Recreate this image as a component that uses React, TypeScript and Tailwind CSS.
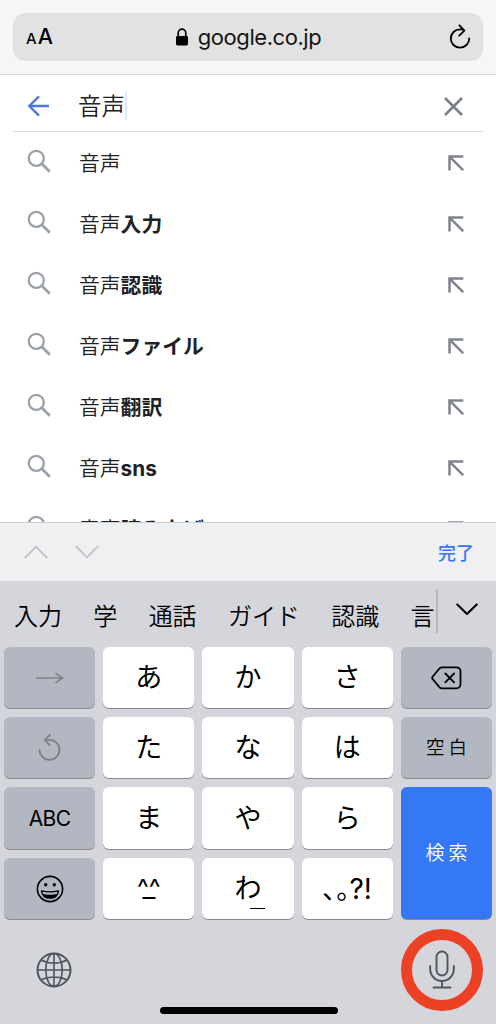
import type { ReactNode } from 'react';

interface Suggestion {
  typed: string;
  completion: string;
}

const suggestions: Suggestion[] = [
  { typed: '音声', completion: '' },
  { typed: '音声', completion: '入力' },
  { typed: '音声', completion: '認識' },
  { typed: '音声', completion: 'ファイル' },
  { typed: '音声', completion: '翻訳' },
  { typed: '音声', completion: 'sns' },
  { typed: '音声', completion: '読み上げ' },
];

const candidates = ['入力', '学', '通話', 'ガイド', '認識', '言'];

function SearchIcon() {
  return (
    <svg className="mb-[3px] size-6 shrink-0 text-[#9aa0a9]" viewBox="0 0 24 24" fill="none" stroke="currentColor">
      <circle cx="9.3" cy="9.3" r="7.5" strokeWidth={2.3} />
      <path d="M14.8 14.8l8 8" strokeWidth={2.8} />
    </svg>
  );
}

function InsertIcon() {
  return (
    <svg className="size-4 shrink-0 text-[#80848c]" viewBox="0 0 16 16" fill="none" stroke="currentColor" strokeWidth={2.5}>
      <path d="M15.3 1.5H1.5V15.5M1.800 1.800L15.200 15.200" />
    </svg>
  );
}

function AddressBar() {
  return (
    <header className="h-[75px] shrink-0 border-b border-[#d8d8d9] bg-[#f6f6f6] px-[13px] pt-[13px]">
      <div className="grid h-12 grid-cols-[1fr_auto_1fr] items-center rounded-xl bg-[#e2e2e2] pr-3 pl-[13px]">
        <div className="flex items-baseline gap-px leading-none font-medium text-black">
          <span className="text-[15px]">A</span>
          <span className="text-[21.5px]">A</span>
        </div>
        <div className="flex items-center gap-2.5 text-[#151515]">
          <svg className="h-[18px] w-3 text-black" viewBox="0 0 12 18" fill="none">
            <path d="M2.2 8.5V5a3.8 3.8 0 017.6 0v3.5" stroke="currentColor" strokeWidth={1.7} />
            <rect x="0" y="8" width="12" height="9.5" rx="1.4" fill="currentColor" />
          </svg>
          <span className="text-[22px] leading-none tracking-[-0.45px]">google.co.jp</span>
        </div>
        <svg className="h-[26px] w-[22px] justify-self-end text-black" viewBox="0 0 22 26" fill="none" stroke="currentColor" strokeWidth={1.8} strokeLinecap="round" strokeLinejoin="round">
          <path d="M20.200 14.500a9.200 9.200 0 11-9.200-9.200c1.800 0 3 .2 4.200.9M10.400 1.300l5 5.300-5.200 5" />
        </svg>
      </div>
    </header>
  );
}

function SearchField() {
  return (
    <div className="mx-[13px] flex h-[57px] shrink-0 items-center border-b border-[#dcdde0] pt-[7px] pr-5 pl-[14px]">
      <svg className="mb-px h-[22px] w-[23px] text-[#4a78dc]" viewBox="0 0 23 22" fill="none" stroke="currentColor" strokeWidth={2.4}>
        <path d="M22 11H2.5M12 1.3L2.3 11l9.7 9.7" />
      </svg>
      <div className="ml-7 flex flex-1 items-center">
        <span className="text-[23.5px] leading-7 font-[350] text-[#202124]">音声</span>
        <span className="mb-0.5 h-[29px] w-0.5 bg-[#dce8fb]" />
      </div>
      <svg className="size-[19px] text-[#7a7e86]" viewBox="0 0 19 19" fill="none" stroke="currentColor" strokeWidth={2.5}>
        <path d="M1 1l17 17M18 1L1 18" />
      </svg>
    </div>
  );
}

function SuggestionRow({ typed, completion }: Suggestion) {
  return (
    <li className="flex h-[61px] items-center pr-8 pl-[27px]">
      <SearchIcon />
      <span className="ml-7 flex-1 pt-0.5 text-[20.800px] leading-7 font-[350] text-[#202124]">
        {typed}
        <b className="font-bold">{completion}</b>
      </span>
      <InsertIcon />
    </li>
  );
}

function FormToolbar() {
  return (
    <div className="flex h-[59px] shrink-0 items-center border-t border-[#cfd0d3] bg-[#eff0f2] pr-[22px] pl-6">
      <svg className="h-[14px] w-6 text-[#c3c4c8]" viewBox="0 0 24 14" fill="none" stroke="currentColor" strokeWidth={1.9}>
        <path d="M.8 13L12 1.7 23.2 13" />
      </svg>
      <svg className="ml-[27px] h-[14px] w-6 text-[#c3c4c8]" viewBox="0 0 24 14" fill="none" stroke="currentColor" strokeWidth={1.9}>
        <path d="M.8 1L12 12.3 23.2 1" />
      </svg>
      <span className="ml-auto pt-[3px] text-[18px] leading-6 font-medium text-[#3478f6]">完了</span>
    </div>
  );
}

function CandidateBar() {
  return (
    <div className="flex h-[66px] shrink-0">
      <div className="flex w-[436px] items-center gap-[31.500px] overflow-hidden pt-[5px] pl-[14px] text-[24px] leading-8 font-[350] tracking-[-0.1px] whitespace-nowrap text-black">
        {candidates.map((word) => (
          <span key={word}>{word}</span>
        ))}
      </div>
      <div className="mt-2 h-11 w-0.5 bg-[#b4b6bc]" />
      <svg className="mt-[22px] ml-[18px] h-[13px] w-[22px] text-black" viewBox="0 0 22 13" fill="none" stroke="currentColor" strokeWidth={2.1} strokeLinecap="round" strokeLinejoin="round">
        <path d="M1.3 1.5L11 11l9.7-9.5" />
      </svg>
    </div>
  );
}

type KeyTone = 'light' | 'dark' | 'blue';

const keyTones: Record<KeyTone, string> = {
  light: 'bg-white text-black text-[27px]',
  dark: 'bg-[#b2b7c1] text-black text-[20px]',
  blue: 'bg-[#3478f6] text-white text-[19px] row-span-2',
};

function Key({ tone = 'light', children }: { tone?: KeyTone; children: ReactNode }) {
  return (
    <button className={`flex items-center justify-center rounded-md leading-none shadow-[0_1px_0_#898a8d] ${keyTones[tone]}`}>
      {children}
    </button>
  );
}

function KeyGrid() {
  return (
    <div className="mx-1 grid h-[272px] shrink-0 grid-cols-5 grid-rows-[61px_61px_62px_61px] gap-x-2 gap-y-[9px]">
      <Key tone="dark">
        <svg className="h-3 w-7 text-[#7e8188]" viewBox="0 0 28 12" fill="none" stroke="currentColor" strokeWidth={1.7} strokeLinecap="round" strokeLinejoin="round">
          <path d="M1 6h25.5M20 1.4L26.7 6 20 10.6" />
        </svg>
      </Key>
      <Key>あ</Key>
      <Key>か</Key>
      <Key>さ</Key>
      <Key tone="dark">
        <svg className="h-6 w-[31px]" viewBox="0 0 31 24" fill="none" stroke="currentColor" strokeWidth={1.8} strokeLinecap="round" strokeLinejoin="round">
          <path d="M11 1.3h14.5a4 4 0 014 4v13a4 4 0 01-4 4H11c-1 0-1.7-.3-2.4-1L1.6 13c-.7-.7-.7-1.500 0-2.200l7-8.500c.7-.7 1.400-1 2.400-1z" />
          <path d="M14.3 7.5l8.800 8.800M23.100 7.500l-8.800 8.800" />
        </svg>
      </Key>

      <Key tone="dark">
        <svg className="h-[27px] w-[23px] text-[#7e8188]" viewBox="0 0 23 27" fill="none" stroke="currentColor" strokeWidth={1.8} strokeLinecap="round" strokeLinejoin="round">
          <path d="M1.500 15.800A10 10 0 1011.500 5.800H7M12 1L6.800 5.800l4.800 5.400" />
        </svg>
      </Key>
      <Key>た</Key>
      <Key>な</Key>
      <Key>は</Key>
      <Key tone="dark">
        <span className="-mr-1 text-[18.5px] font-[350] tracking-[4px]">空白</span>
      </Key>

      <Key tone="dark">
        <span className="text-[21px] tracking-[-0.6px]">ABC</span>
      </Key>
      <Key>ま</Key>
      <Key>や</Key>
      <Key>ら</Key>
      <Key tone="blue">
        <span className="-mr-1 font-[350] tracking-[4px]">検索</span>
      </Key>

      <Key tone="dark">
        <svg className="size-7" viewBox="0 0 28 28" fill="none">
          <circle cx="14" cy="14" r="12.6" stroke="currentColor" strokeWidth={1.6} />
          <circle cx="9.7" cy="9.7" r="1.7" fill="currentColor" />
          <circle cx="18.3" cy="9.7" r="1.7" fill="currentColor" />
          <path d="M5.500 15.800c5 1.300 12 1.300 17 0-.6 4.700-4 7.400-8.500 7.400s-7.900-2.700-8.500-7.400z" stroke="currentColor" strokeWidth={1.3} strokeLinejoin="round" />
          <path d="M6.600 18.700c4.300 1.400 10.500 1.400 14.800 0-1.300 2.900-3.900 4.500-7.400 4.500s-6.100-1.600-7.400-4.500z" fill="currentColor" />
        </svg>
      </Key>
      <Key>
        <span className="relative text-[25px] leading-none">
          ^^
          <span className="absolute top-[21px] left-1/2 h-0.5 w-[13px] -translate-x-1/2 bg-black" />
        </span>
      </Key>
      <Key>
        <span className="relative">
          わ
          <span className="absolute right-[-4px] bottom-[-7px] h-px w-[15px] bg-black" />
        </span>
      </Key>
      <Key>
        <span className="flex items-baseline">
          <span className="w-[14px]">､</span>
          <span className="w-[13px]">｡</span>
          <span className="text-[28px]">?!</span>
        </span>
      </Key>
    </div>
  );
}

function BottomBar() {
  return (
    <div className="grid min-h-0 flex-1 grid-cols-[124px_178px_1fr] items-start pt-[10px] pr-[13px] pl-9">
      <svg className="mt-[23px] size-9 text-[#50545d]" viewBox="0 0 36 36" fill="none" stroke="currentColor" strokeWidth={1.6}>
        <circle cx="18" cy="18" r="16.5" strokeWidth={2} />
        <ellipse cx="18" cy="18" rx="8.2" ry="16.5" />
        <path d="M18 1.5v33M1.5 18h33M5.500 8.200c7 3.700 18 3.700 25 0M5.500 27.800c7-3.700 18-3.700 25 0" />
      </svg>
      <div className="mt-[78px] h-[7px] rounded-full bg-black" />
      <div className="flex size-[82px] items-center justify-center justify-self-end rounded-full border-[11px] border-[#ec4125]">
        <svg className="-mt-0.5 h-[39px] w-[26px] text-[#50545d]" viewBox="0 0 26 39" fill="none" stroke="currentColor" strokeWidth={1.9} strokeLinecap="round">
          <rect x="7.5" y="1.5" width="11" height="24" rx="5.5" />
          <path d="M1.200 16v3.200a11.800 11.800 0 0023.600 0V16M13 31v6.500M4.500 37.500h17" />
        </svg>
      </div>
    </div>
  );
}

export default function App() {
  return (
    <div
      lang="ja"
      className="flex h-[1024px] w-[496px] flex-col overflow-hidden bg-white font-['Inter','Noto_Sans_CJK_JP',sans-serif]"
    >
      <AddressBar />
      <SearchField />
      <ul className="min-h-0 flex-1 overflow-hidden">
        {suggestions.map((item, index) => (
          <SuggestionRow key={index} {...item} />
        ))}
      </ul>
      <FormToolbar />
      <div className="flex h-[443px] shrink-0 flex-col bg-[#d5d6dc]">
        <CandidateBar />
        <KeyGrid />
        <BottomBar />
      </div>
    </div>
  );
}
